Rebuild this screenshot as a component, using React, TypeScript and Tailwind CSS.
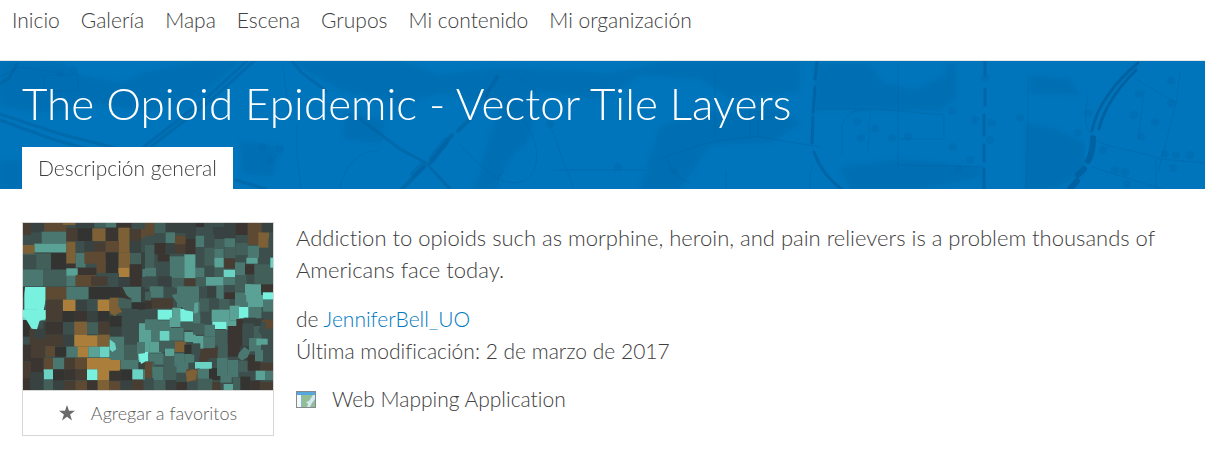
import React from "react";

const NAV = ["Inicio", "Galería", "Mapa", "Escena", "Grupos", "Mi contenido", "Mi organización"];

const PALETTE: Record<string, string> = {
  k: "#333332",
  b: "#3a3531",
  n: "#483d33",
  m: "#5e4a33",
  o: "#7d6035",
  a: "#ab7f3b",
  g: "#384240",
  h: "#3d4f4c",
  i: "#435f5a",
  j: "#4a776f",
  l: "#5aa295",
  t: "#6bd3c4",
  T: "#78f1de",
};

type Quadrant = { x: number; y: number; cells: string; shapes: [string, string][] };

/* Each cell is "colour x y width height" on the thumbnail's 750 x 501 grid. */
const QUADRANTS: Quadrant[] = [
  {
    x: -24,
    y: -24,
    cells:
      "n 24 24 24 40,g 48 24 40 28,m 88 24 66 26,h 24 60 58 34,j 80 50 74 36,l 58 86 96 26,o 24 90 34 34,i 24 116 84 48,h 24 120 40 42,k 108 114 46 50,n 154 38 36 42,o 154 80 28 66,k 188 38 44 42,b 154 146 34 14,h 182 78 28 36,g 208 78 30 32,j 182 114 30 44,n 238 80 34 32,m 208 110 66 36,o 144 24 38 6,g 182 24 56 16,i 238 24 34 14,j 272 24 32 14,b 304 24 46 16,h 350 24 55 18,o 232 40 40 38,b 272 38 38 42,o 310 38 34 74,n 344 42 34 38,m 378 42 27 28,m 272 78 40 34,g 344 78 34 36,h 378 70 27 42,o 310 112 36 46,i 346 114 32 34,g 378 112 27 36,k 272 112 38 62,m 244 138 28 36,b 188 158 56 26,a 310 158 34 28,b 344 148 38 66,g 380 148 25 14,j 382 162 23 24,h 380 186 25 30,j 24 164 60 50,i 84 164 70 50,l 154 160 34 24,j 154 182 28 32,m 182 180 62 34,n 228 184 50 28,h 278 174 34 40,g 310 186 34 30,T 28 216 64 72,m 92 216 62 38,j 154 216 66 38,k 222 216 98 36,n 92 254 50 34,a 144 254 38 34,g 182 254 34 38,h 216 252 34 36,a 248 254 36 34,o 284 248 28 48,j 322 216 56 46,g 378 216 27 46,i 310 248 40 32,k 350 262 55 24,t 24 284 44 42,t 68 288 24 28,n 92 288 50 32,k 142 288 36 34,b 178 288 38 32,g 216 288 32 34,k 248 288 36 32,g 284 302 32 43,h 316 282 54 63,n 24 324 30 21,g 84 320 60 25,i 144 322 34 23,o 178 320 38 25,i 216 322 34 23,n 250 320 34 25,n 316 310 18 35,h 370 284 35 42,l 374 326 16 19",
    shapes: [
      ["b", "M24 216h6l-4 30h-2z"],
      ["o", "M284 252l12-4 4 18 12 10 10 16-14 2-8 10-16-12z"],
      ["b", "M310 216h12l12 24 16 14-30-6z"],
      ["g", "M92 254l-6 34 6 10z"],
    ],
  },
  {
    x: 366,
    y: -24,
    cells:
      "m 0 24 28 38,i 28 24 34 30,g 62 24 90 30,h 0 62 62 26,j 62 52 28 32,m 90 62 32 28,g 122 30 30 42,k 152 24 26 36,h 178 24 60 22,h 152 36 52 26,g 204 36 36 36,g 238 24 34 48,b 272 24 36 36,m 308 24 42 66,o 340 52 32 46,g 350 24 34 28,h 370 70 14 50,b 28 84 34 34,g 62 84 28 32,n 90 88 34 28,b 122 72 30 84,j 152 62 26 34,h 178 58 30 42,i 208 72 30 30,j 238 70 32 26,i 238 96 34 34,i 272 84 36 36,j 308 92 34 36,h 342 100 42 40,i 0 90 28 68,b 38 118 36 22,j 74 124 44 66,l 118 118 34 72,h 152 96 26 62,i 178 98 30 56,j 208 102 28 26,l 208 128 28 30,n 238 130 32 30,j 270 142 30 44,l 304 128 34 18,b 300 148 28 30,i 328 148 56 62,t 376 128 8 30,j 0 158 34 28,h 34 140 40 44,j 152 158 28 28,h 178 152 30 34,i 208 158 30 28,t 236 164 34 22,l 182 186 54 26,j 236 186 34 24,i 270 180 34 50,h 0 184 38 38,g 38 184 42 34,i 80 190 36 30,n 118 190 34 24,i 152 186 30 50,j 14 214 42 34,i 0 230 18 26,h 56 216 32 36,j 96 214 66 62,h 162 214 24 40,g 186 214 28 34,j 214 212 24 40,h 236 212 34 40,b 238 232 32 20,j 270 232 38 44,l 300 208 48 32,b 348 208 36 24,T 354 232 30 22,l 308 240 46 36,j 354 254 30 38,n 18 250 66 30,b 0 258 20 40,h 0 282 38 40,T 38 284 44 30,l 82 278 26 58,T 106 282 38 38,j 144 260 30 62,i 164 250 28 48,h 192 250 30 38,i 222 252 32 36,l 254 272 30 44,T 282 276 30 34,j 310 276 40 40,h 350 290 34 28,g 0 322 38 23,j 38 316 40 29,l 74 308 32 28,i 106 320 40 25,j 144 320 32 25,h 166 290 34 55,l 200 284 54 36,T 202 320 44 22,l 244 316 34 29,b 274 312 22 33,g 296 308 36 37,g 330 310 28 35,m 350 314 34 31",
    shapes: [
      ["g", "M88 24h34l-4 14-12 16-14-12z"],
      ["j", "M80 240l16-4 8 12 30-10 20 24-8 28-26-4-24-22z"],
      ["l", "M148 264l12-2v30l-14 4z"],
      ["l", "M302 206l28 4 14 18-10 26-30 8z"],
    ],
  },
  {
    x: -24,
    y: 261,
    cells:
      "k 24 30 20 50,n 44 60 48 50,g 56 56 36 30,b 92 36 52 38,h 144 36 34 38,o 178 36 38 38,i 216 38 34 34,n 250 36 34 38,k 284 18 38 34,g 284 50 36 30,h 320 20 52 60,l 372 40 33 56,n 92 74 52 34,g 144 74 34 34,a 178 74 38 36,a 216 76 32 34,o 248 74 36 36,j 284 80 44 34,h 328 56 44 52,b 24 104 24 50,n 48 90 42 54,m 92 108 28 32,k 120 110 34 30,j 154 110 36 32,a 188 110 32 32,l 220 110 34 32,t 254 110 30 32,j 284 110 44 40,i 328 104 42 50,j 366 96 39 36,t 370 132 28 26,b 44 144 42 60,m 86 144 28 34,j 114 144 34 34,n 148 144 32 34,m 180 144 36 34,a 216 144 68 34,a 282 150 34 30,j 318 150 54 30,g 370 156 35 24,n 24 156 24 50,t 86 178 28 30,k 114 178 34 34,b 148 178 34 32,n 182 178 34 32,T 216 178 32 32,a 248 178 34 34,b 284 180 32 32,k 316 178 36 34,t 352 178 32 30,j 384 178 21 34,b 24 204 22 36,g 46 186 40 54,i 86 210 28 30,g 114 212 34 28,n 148 212 34 28,m 182 212 34 28,b 216 212 32 28,o 248 210 34 30,m 282 214 34 26,g 316 212 36 28,n 352 210 34 30,h 386 210 19 30",
    shapes: [
      ["T", "M24 0h68v26l-18 6-8 26-16-2-18-30-8-6z"],
      ["t", "M284 88l16 12 4 18-12 8-8-8z"],
      ["T", "M370 132l26-4 4 22-22 12z"],
      ["a", "M248 146h34l18 8 14 10v18h-66z"],
    ],
  },
  {
    x: 366,
    y: 261,
    cells:
      "j 0 28 40 32,l 0 60 18 36,j 18 60 26 52,t 44 62 30 32,j 74 54 42 38,l 118 66 34 30,i 144 40 34 34,j 178 44 32 36,i 210 60 38 46,b 248 48 44 92,h 292 40 34 48,i 326 48 26 36,m 352 36 32 20,h 350 56 34 34,l 0 92 14 34,T 0 126 10 28,l 14 96 36 32,i 42 92 48 34,o 90 94 32 32,k 118 104 22 30,l 144 78 32 40,j 176 80 34 34,n 164 116 54 28,i 218 100 30 46,g 284 108 30 54,j 312 84 36 40,l 334 86 34 20,h 348 104 36 36,j 10 130 46 34,l 60 116 28 22,i 56 138 42 34,j 88 130 30 40,j 118 132 30 26,h 140 100 26 34,i 0 154 28 30,m 0 156 20 48,j 22 170 32 40,i 54 170 40 40,j 94 156 36 32,t 150 156 50 20,m 124 178 34 36,j 158 174 34 34,k 192 174 36 36,j 216 144 32 54,j 248 150 32 52,i 280 152 30 34,b 308 134 38 48,j 330 120 24 34,n 346 158 38 26,l 332 182 30 28,j 360 182 24 28,h 0 204 26 36,i 26 210 36 30,g 62 210 32 30,b 94 216 34 24,h 126 212 34 28,i 158 206 44 34,n 202 216 24 24,j 226 194 34 24,l 236 222 36 18,i 264 202 24 38,k 286 200 30 40,b 316 212 30 28,n 344 216 40 24",
    shapes: [
      ["n", "M162 144l18-22 38-12v12l-18 12-12 20-24 2z"],
      ["o", "M122 186l20-8 16 4-6 28-26 6z"],
      ["t", "M150 156h50v20h-34l-16-8z"],
      ["j", "M282 128l16-18 18 14-8 18-18 10-12-12z"],
      ["h", "M350 36h12v20l18 14-4 20-22-10-14-16z"],
    ],
  },
];

function Thumbnail() {
  return (
    <svg viewBox="0 0 750 501" className="block w-full" role="img" aria-label="Mosaico de condados">
      <rect width="750" height="501" fill="#3c4f4c" />
      {QUADRANTS.map((q, i) => (
        <g key={i} transform={`translate(${q.x} ${q.y})`}>
          {q.cells.split(",").map((cell, j) => {
            const [c, x, y, w, h] = cell.split(" ");
            return <rect key={j} x={x} y={y} width={w} height={h} fill={PALETTE[c]} />;
          })}
          {q.shapes.map(([c, d], j) => (
            <path key={j} d={d} fill={PALETTE[c]} />
          ))}
        </g>
      ))}
    </svg>
  );
}

function BannerMap() {
  return (
    <svg
      viewBox="0 0 1205 128"
      preserveAspectRatio="xMinYMin slice"
      className="absolute inset-0 h-full w-full"
      aria-hidden="true"
    >
      <defs>
        <filter id="terrain" x="0" y="0" width="100%" height="100%">
          <feGaussianBlur stdDeviation="2" />
        </filter>
        <filter id="roads" x="0" y="0" width="100%" height="100%">
          <feGaussianBlur stdDeviation="0.6" />
        </filter>
      </defs>
      <rect width="1205" height="128" fill="#0075bb" />
      <g fill="#006bae" opacity="0.6" filter="url(#terrain)">
        <path d="M0 0h60l20 14 40 8 30-12 50-10h40l-40 36-50 14-60-8-40 10-50-6z" />
        <path d="M290 0h110l40 14 60-8 110 6 60-12h130v30l-70 8-30-20-60-4-40 24-60-8-40 16-60-14-40 12-60-16z" />
        <path d="M505 34l30 8-6 36-20 20-14 30h-20l14-50z" />
        <path d="M660 66l40-14 80-4 20 14-30 20-60 2-30 44h-40z" />
        <path d="M815 3h55l12 18 32 8 30-14 4-12h8v34l-16 12H815z" />
        <path d="M840 106l60-8 80 8v10l-60 12h-70z" />
        <path d="M1025 62l30 6 30 14-2 30-30 16h-28z" />
        <path d="M1030 14l40 4 10 16-50-2z" />
        <path d="M0 100l50-4 60 10-20 22H0z" />
        <path d="M345 50l40 10-4 22-38-4zM240 80l40 6-8 30-30-4z" />
      </g>
      <g fill="none" stroke="#00609f" strokeLinecap="round" filter="url(#roads)">
        <g strokeWidth="3" opacity="0.5">
          <path d="M0 53l60 20 56 14" />
          <path d="M0 59l52 19 50 14" />
          <path d="M254 0l-42 38-64 50" />
          <path d="M247 0l-42 38-64 50" />
          <path d="M292 0l10 12 24 18M360 58l40 30 26 14 24 26" />
          <path d="M236 119l30 9M17 3L9 17 0 23" />
        </g>
        <path d="M497 16l-12 20M472 56l-14 14M452 74l-22 28M424 106l-22 22" strokeWidth="4" opacity="0.6" />
        <path d="M446 80l-14 18M422 105l-8 8" strokeWidth="7" opacity="0.4" />
        <g strokeWidth="3" opacity="0.7">
          <path d="M817 0l-2 18M815 26l-2 26M813 56l-1 26M814 91c6 16 14 28 28 37" />
          <path d="M985 0v14M985 28v16M984 54v20M984 84v16M984 108v20" />
        </g>
        <g strokeWidth="3" opacity="0.85">
          <path d="M1138 2c-22 18-42 44-46 68" />
          <path d="M1136 9c-18 18-32 38-37 59" />
          <path d="M1093 77c0 12-2 18-5 23" strokeWidth="6" />
          <path d="M1084 108l-6 6M1077 120l-7 8" strokeWidth="6" />
        </g>
        <g strokeWidth="1" opacity="0.35">
          <path d="M283 4l6 50M297 64v30l4 34M340 128c4-24 20-40 38-38M0 16l20-10 40 6M44 14h34v16H44z" />
          <path d="M520 18c20 8 18 26 26 34l18 50 10 26M524 60c16 20 18 50 0 60-20 6-34-4-64-36M498 128c-2-12 2-16 6-18" />
          <path d="M554 109h90M715 10v64M750 34v42M758 34v42M660 98c30-12 60-22 100-22l60 10M726 110v18M668 96c0 14 12 22 22 26" />
          <path d="M898 3v106M816 48h60l68 6v24h-44M870 50l-2 40M842 94V66c2-12 10-16 24-18M900 104l84 2M1028 16v64l-2 48" />
          <path d="M1136 18l40 24 4-30M1176 42l-18 70M1144 30l-6 48M1094 78c14 10 40 10 66 20l45 4M1156 98v30M1092 106l70 22" />
          <path d="M813 104c-4 8-3 16-3 24M1088 34c-4 24-4 34 6 42" />
        </g>
      </g>
      <g fill="#0068aa" opacity="0.4" filter="url(#roads)">
        {[
          [857, 60], [875, 68], [861, 77], [892, 77], [908, 76], [952, 50], [975, 59], [953, 86], [970, 99],
          [958, 108], [985, 17], [992, 62], [990, 79], [1020, 57], [1088, 52], [1078, 72], [1139, 33],
          [1134, 54], [1155, 61], [1141, 76], [1171, 20], [1171, 42], [1165, 93], [1176, 94], [1190, 94],
          [1173, 107], [1103, 89], [1115, 109], [1125, 111], [1127, 123], [618, 106], [674, 110], [550, 63],
          [262, 86], [280, 88], [270, 100], [60, 12], [74, 9],
        ].map(([cx, cy]) => (
          <circle key={`${cx}-${cy}`} cx={cx} cy={cy} r="4" />
        ))}
      </g>
    </svg>
  );
}

function AppIcon() {
  return (
    <svg viewBox="0 0 20 17" className="h-[17px] w-5 shrink-0" aria-hidden="true">
      <rect width="20" height="17" fill="#858a8f" />
      <rect x="1" y="1" width="18" height="3" fill="#55a7dd" />
      <rect x="1" y="4" width="4" height="12" fill="#f5f9fc" />
      <rect x="5" y="4" width="1" height="12" fill="#7dbbe4" />
      <rect x="6" y="4" width="13" height="12" fill="#93bd92" />
      <path d="M19 4v4l-3 4-2 4h-3l1-3-2-2 3-1 2-3 2-3z" fill="#d5e8f5" />
    </svg>
  );
}

export default function App() {
  return (
    <div className="min-h-screen bg-white font-['Lato',sans-serif] text-[21px] leading-8 font-light text-[#404040] [font-variant-ligatures:none]">
      <header className="border-b border-[#e8e8e8] px-3 pt-1 pb-6">
        <nav aria-label="Principal" className="flex flex-wrap gap-x-[21px]">
          {NAV.map((label) => (
            <a key={label} href="#">
              {label}
            </a>
          ))}
        </nav>
      </header>

      <section className="relative overflow-hidden px-[22px] pt-[14px]">
        <BannerMap />
        <div className="relative">
          <h1 className="text-[44px] leading-[56px] text-white">The Opioid Epidemic - Vector Tile Layers</h1>
          <div className="mt-4 flex">
            <a href="#" className="bg-white px-4 py-[5px]">
              Descripción general
            </a>
          </div>
        </div>
      </section>

      <main className="flex items-start gap-[22px] px-[22px] pt-[33px] pb-8">
        <aside className="w-[252px] shrink-0 border border-[#d6d6d6]">
          <Thumbnail />
          <button
            type="button"
            className="flex w-full items-center justify-center gap-4 border-t border-[#d6d6d6] py-1.5 text-lg leading-8 text-[#5c5c5c]"
          >
            <svg viewBox="0 0 16 16" className="h-4 w-4" fill="#6a6a6a" aria-hidden="true">
              <path d="M8 0l2 5.800h6l-4.900 3.600 1.900 6L8 11.800 3 15.400l1.900-6L0 5.800h6z" />
            </svg>
            Agregar a favoritos
          </button>
        </aside>

        <div className="min-w-0 flex-1">
          <p className="text-[22px]">
            Addiction to opioids such as morphine, heroin, and pain relievers is a problem thousands of Americans face
            today.
          </p>
          <p className="mt-[17px]">
            de{" "}
            <a href="#" className="text-[#0079c1]">
              JenniferBell_UO
            </a>
          </p>
          <p>Última modificación: 2 de marzo de 2017</p>
          <div className="mt-4 flex items-center gap-4">
            <AppIcon />
            <span>Web Mapping Application</span>
          </div>
        </div>
      </main>
    </div>
  );
}
